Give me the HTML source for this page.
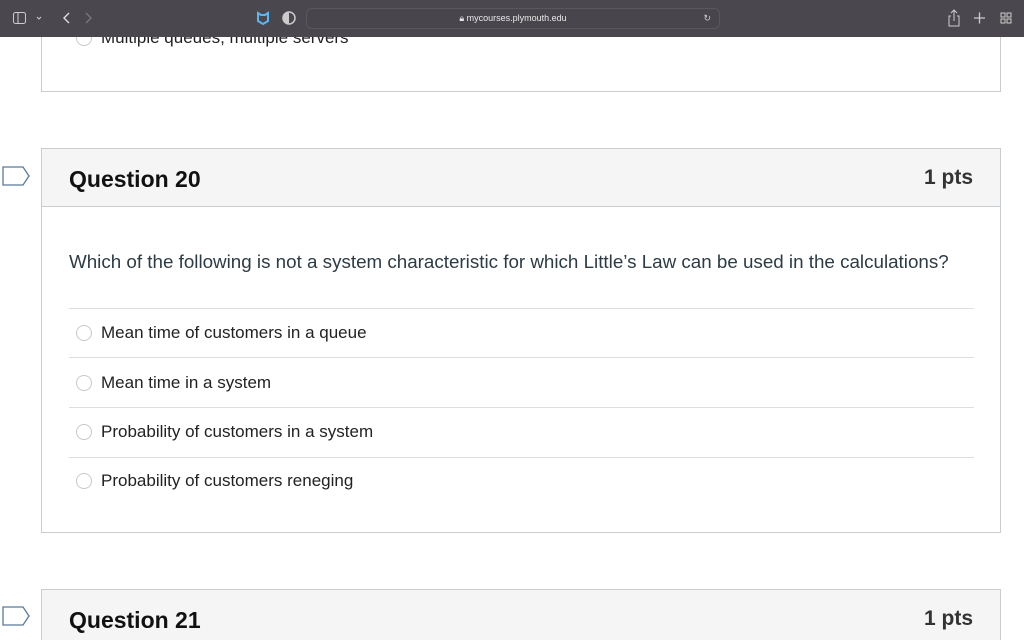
<!DOCTYPE html>
<html><head><style>
*{margin:0;padding:0;box-sizing:border-box}
html,body{width:1024px;height:640px;overflow:hidden}
body{background:#fff;font-family:"Liberation Sans",sans-serif;position:relative;color:#2d3b45}
.bar{position:absolute;left:0;top:0;width:1024px;height:37px;background:#4a484e;color:#ddd}
.url{position:absolute;left:306px;top:8px;width:414px;height:21px;border:1px solid #5a585e;border-radius:6px;background:#48464c;font-size:9px;color:#e8e8e8;text-align:center;line-height:19px}
.box{position:absolute;left:41px;width:960px;border:1px solid #c7cdd1;overflow:hidden}
.hdr{position:absolute;left:0;top:0;right:0;height:58px;background:#f5f5f5;border-bottom:1px solid #c7cdd1}
.qt{position:absolute;left:27px;top:17px;font-size:23px;font-weight:bold;color:#111}
.pts{position:absolute;right:27px;top:17px;font-size:21px;font-weight:bold;color:#333}
.sep{position:absolute;left:27px;width:905px;height:1px;background:#dcdfe2}
.opt{position:absolute;left:59px;font-size:17px;color:#222}
.rad{position:absolute;left:34px;width:16px;height:16px;border:1px solid #c8c8c8;border-radius:50%}
.flag{position:absolute;left:2px;width:28px;height:20px}
</style></head><body>
<div class="box" style="top:-10px;height:102px">
 <div class="rad" style="top:39px"></div>
 <div class="opt" style="top:37px;font-size:17px">Multiple queues, multiple servers</div>
</div>
<div class="bar">
 <svg style="position:absolute;left:13px;top:12px" width="30" height="13"><rect x="0.5" y="0.5" width="12" height="11" rx="2" fill="none" stroke="#ccc"/><line x1="5" y1="1" x2="5" y2="12" stroke="#ccc"/><path d="M24 5l2 2 2-2" stroke="#ccc" fill="none"/></svg>
 <svg style="position:absolute;left:60px;top:11px" width="40" height="14"><path d="M9 2l-5 5 5 5" stroke="#ddd" fill="none" stroke-width="1.4"/><path d="M26 2l5 5-5 5" stroke="#777" fill="none" stroke-width="1.4"/></svg>
 <svg style="position:absolute;left:256px;top:11px" width="40" height="15"><path d="M2 2l3 2h4l3-2v8l-5 3-5-3z" fill="none" stroke="#5ab8f0" stroke-width="2"/><path d="M33 1a6 6 0 0 0 0 12 6 6 0 0 0 0-12z" fill="none" stroke="#ccc" stroke-width="1.5"/><path d="M33 1v12a6 6 0 0 1 0-12z" fill="#ccc"/></svg>
 <div class="url">🔒︎ mycourses.plymouth.edu<span style="position:absolute;right:8px;color:#ccc">↻</span></div>
 <svg style="position:absolute;left:946px;top:9px" width="70" height="18"><path d="M5 7H3v10h10V7h-2M8 12V1M5 4l3-3 3 3" stroke="#ccc" fill="none"/><path d="M28 9h11M33.5 3.5v11" stroke="#ccc" stroke-width="1.3"/><rect x="55" y="4" width="4" height="4" fill="none" stroke="#ccc"/><rect x="61" y="4" width="4" height="4" fill="none" stroke="#ccc"/><rect x="55" y="10" width="4" height="4" fill="none" stroke="#ccc"/><rect x="61" y="10" width="4" height="4" fill="none" stroke="#ccc"/></svg>
</div>
<svg class="flag" style="top:166px" viewBox="0 0 28 20"><path d="M1 1h20l6 9-6 9H1z" fill="#fff" stroke="#5b7a99" stroke-width="1.3"/></svg>
<div class="box" style="top:148px;height:385px">
 <div class="hdr"><div class="qt">Question 20</div><div class="pts">1 pts</div></div>
 <div style="position:absolute;left:27px;top:102px;font-size:18.8px;color:#2d3b45;white-space:nowrap">Which of the following is not a system characteristic for which Little’s Law can be used in the calculations?</div>
 <div class="sep" style="top:159px"></div>
 <div class="rad" style="top:176px"></div><div class="opt" style="top:174px">Mean time of customers in a queue</div>
 <div class="sep" style="top:208px"></div>
 <div class="rad" style="top:226px"></div><div class="opt" style="top:224px">Mean time in a system</div>
 <div class="sep" style="top:258px"></div>
 <div class="rad" style="top:275px"></div><div class="opt" style="top:273px">Probability of customers in a system</div>
 <div class="sep" style="top:308px"></div>
 <div class="rad" style="top:324px"></div><div class="opt" style="top:322px">Probability of customers reneging</div>
</div>
<svg class="flag" style="top:606px" viewBox="0 0 28 20"><path d="M1 1h20l6 9-6 9H1z" fill="#fff" stroke="#5b7a99" stroke-width="1.3"/></svg>
<div class="box" style="top:589px;height:51px;border-bottom:none">
 <div class="hdr" style="height:60px;border-bottom:none"><div class="qt">Question 21</div><div class="pts">1 pts</div></div>
</div>
</body></html>
